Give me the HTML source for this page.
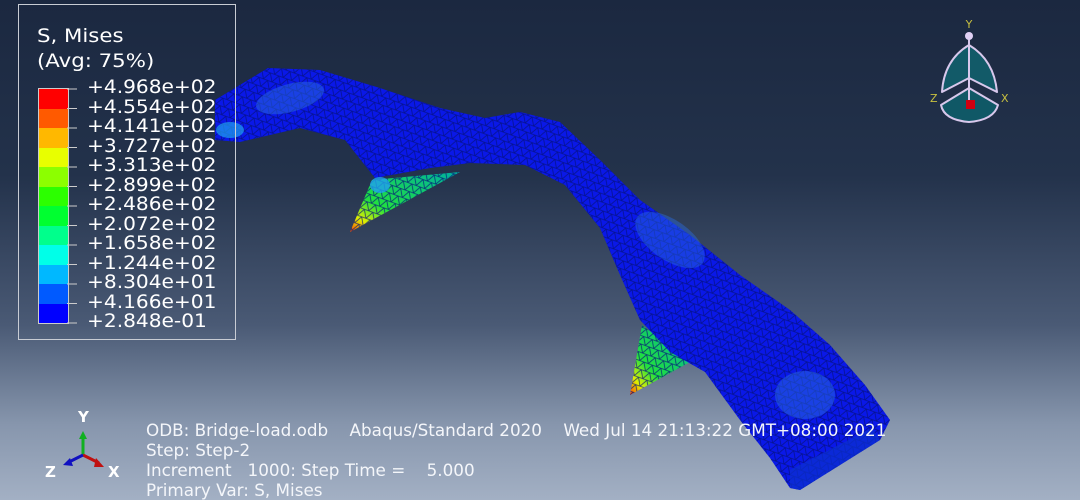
<!DOCTYPE html>
<html><head><style>
html,body{margin:0;padding:0;width:1080px;height:500px;overflow:hidden}
body{background:linear-gradient(180deg,#1b2840 0%,#23324b 35%,#4a5a75 65%,#8796ad 85%,#a3b0c4 100%);font-family:"DejaVu Sans","Liberation Sans",sans-serif;color:#fff;position:relative}
.legend{position:absolute;left:18px;top:4px;width:218px;height:336px;border:1px solid #c8ccd4;box-sizing:border-box}
.t{position:absolute;font-size:19px;line-height:19.5px;white-space:pre;transform-origin:0 0}
.info{position:absolute;left:146px;top:420px;font-size:16.8px;line-height:20px;white-space:pre;color:#f4f6fa}
</style></head><body>
<svg width="1080" height="500" style="position:absolute;left:0;top:0">
<defs>
<pattern id="m" width="9" height="8" patternUnits="userSpaceOnUse" patternTransform="rotate(20)">
<path d="M0 0H9M0 0L4.5 8L9 0M0 8H9" stroke="#05127a" stroke-width="0.8" fill="none" opacity="0.8"/>
</pattern>
<linearGradient id="lg" x1="0" y1="1" x2="1" y2="0"><stop offset="0" stop-color="#ff4000"/><stop offset="0.15" stop-color="#e0f000"/><stop offset="0.35" stop-color="#20e040"/><stop offset="1" stop-color="#00b0a0"/></linearGradient>
</defs>
<polygon points="350,232 372,180 460,172" fill="url(#lg)"/>
<polygon points="350,232 372,180 460,172" fill="url(#m)"/>
<polygon points="630,395 642,325 690,362" fill="url(#lg)"/>
<polygon points="630,395 642,325 690,362" fill="url(#m)"/>
<path d="M215,100 L268,68 L320,70 L380,88 L440,108 L485,118 L520,112 L560,122 L600,160 L640,200 L690,235 L740,275 L790,310 L830,345 L865,385 L890,420 L880,440 L800,490 L790,488 L770,458 L740,420 L705,372 L670,352 L640,320 L620,275 L600,228 L565,185 L525,165 L470,163 L430,168 L375,178 L345,140 L300,128 L240,142 L215,140 Z" fill="#0a18e8"/>
<path d="M215,100 L268,68 L320,70 L380,88 L440,108 L485,118 L520,112 L560,122 L600,160 L640,200 L690,235 L740,275 L790,310 L830,345 L865,385 L890,420 L880,440 L800,490 L790,488 L770,458 L740,420 L705,372 L670,352 L640,320 L620,275 L600,228 L565,185 L525,165 L470,163 L430,168 L375,178 L345,140 L300,128 L240,142 L215,140 Z" fill="url(#m)"/>
<path d="M880,440 L800,490 L790,488 L790,470 L872,428 Z" fill="#0c30d0" opacity="0.7"/>
<ellipse cx="290" cy="98" rx="35" ry="14" fill="#2a6adf" opacity="0.5" transform="rotate(-15 290 98)"/>
<ellipse cx="670" cy="240" rx="40" ry="20" fill="#2a6adf" opacity="0.45" transform="rotate(35 670 240)"/>
<ellipse cx="805" cy="395" rx="30" ry="24" fill="#2a6adf" opacity="0.5"/>
<ellipse cx="230" cy="130" rx="14" ry="8" fill="#20a0f0" opacity="0.7"/>
<ellipse cx="380" cy="185" rx="10" ry="8" fill="#20a0f0" opacity="0.8"/>
<g stroke="#d8c8ec" stroke-width="2" fill="#125a68" stroke-linejoin="round">
<path d="M969,45 Q944,60 942,92 L969,78 L997,92 Q994,60 969,45 Z"/>
<path d="M969,88 L941,105 Q944,120 969,122 Q994,120 998,105 Z" fill="#105866"/>
<line x1="969" y1="38" x2="969" y2="100"/>
</g>
<circle cx="969" cy="36" r="4" fill="#e0d0f4"/>
<rect x="966" y="100" width="9" height="9" fill="#d00010"/>
<text x="969" y="28" font-size="11" fill="#c8c040" text-anchor="middle" font-family="DejaVu Sans">Y</text>
<text x="930" y="102" font-size="11" fill="#c8c040" font-family="DejaVu Sans">Z</text>
<text x="1001" y="102" font-size="11" fill="#c8c040" font-family="DejaVu Sans">X</text>
<line x1="83" y1="455" x2="83" y2="436" stroke="#10b020" stroke-width="3"/>
<polygon points="79,439 87,439 83,431" fill="#10b020"/>
<line x1="83" y1="455" x2="99" y2="463" stroke="#c01010" stroke-width="3"/>
<polygon points="96,458 104,467 94,467" fill="#c01010"/>
<line x1="83" y1="455" x2="69" y2="462" stroke="#1010c0" stroke-width="3"/>
<polygon points="63,465 70,458 73,466" fill="#1010c0"/>
<text x="78" y="422" font-size="15" font-weight="bold" fill="#fff" font-family="DejaVu Sans">Y</text>
<text x="45" y="477" font-size="15" font-weight="bold" fill="#fff" font-family="DejaVu Sans">Z</text>
<text x="108" y="477" font-size="15" font-weight="bold" fill="#fff" font-family="DejaVu Sans">X</text>
</svg>
<div class="legend">
<div class="t" style="left:18px;top:22px;transform:scaleX(1.12)">S, Mises</div>
<div class="t" style="left:18px;top:47px;transform:scaleX(1.12)">(Avg: 75%)</div>
<div style="position:absolute;left:19px;top:83px;width:29px;border:1px solid #ccc">
<div style="height:19.5px;background:#ff0000"></div><div style="height:19.5px;background:#ff5a00"></div><div style="height:19.5px;background:#ffb800"></div><div style="height:19.5px;background:#e8ff00"></div><div style="height:19.5px;background:#8cff00"></div><div style="height:19.5px;background:#2cff00"></div><div style="height:19.5px;background:#00ff30"></div><div style="height:19.5px;background:#00ff8c"></div><div style="height:19.5px;background:#00ffe8"></div><div style="height:19.5px;background:#00b8ff"></div><div style="height:19.5px;background:#005aff"></div><div style="height:19.5px;background:#0000ff"></div>
</div>
<svg width="60" height="250" style="position:absolute;left:48px;top:83px">
<g stroke="#ccc" stroke-width="1">
<line x1="0" y1="1" x2="10" y2="1"/><line x1="0" y1="20.5" x2="10" y2="20.5"/><line x1="0" y1="40" x2="10" y2="40"/><line x1="0" y1="59.5" x2="10" y2="59.5"/><line x1="0" y1="79" x2="10" y2="79"/><line x1="0" y1="98.5" x2="10" y2="98.5"/><line x1="0" y1="118" x2="10" y2="118"/><line x1="0" y1="137.5" x2="10" y2="137.5"/><line x1="0" y1="157" x2="10" y2="157"/><line x1="0" y1="176.5" x2="10" y2="176.5"/><line x1="0" y1="196" x2="10" y2="196"/><line x1="0" y1="215.5" x2="10" y2="215.5"/><line x1="0" y1="235" x2="10" y2="235"/>
</g></svg>
<div class="t" style="left:68px;top:73px;transform:scaleX(1.06)">+4.968e+02
+4.554e+02
+4.141e+02
+3.727e+02
+3.313e+02
+2.899e+02
+2.486e+02
+2.072e+02
+1.658e+02
+1.244e+02
+8.304e+01
+4.166e+01
+2.848e-01</div>
</div>
<div class="info">ODB: Bridge-load.odb    Abaqus/Standard 2020    Wed Jul 14 21:13:22 GMT+08:00 2021
Step: Step-2
Increment   1000: Step Time =    5.000
Primary Var: S, Mises</div>
</body></html>
